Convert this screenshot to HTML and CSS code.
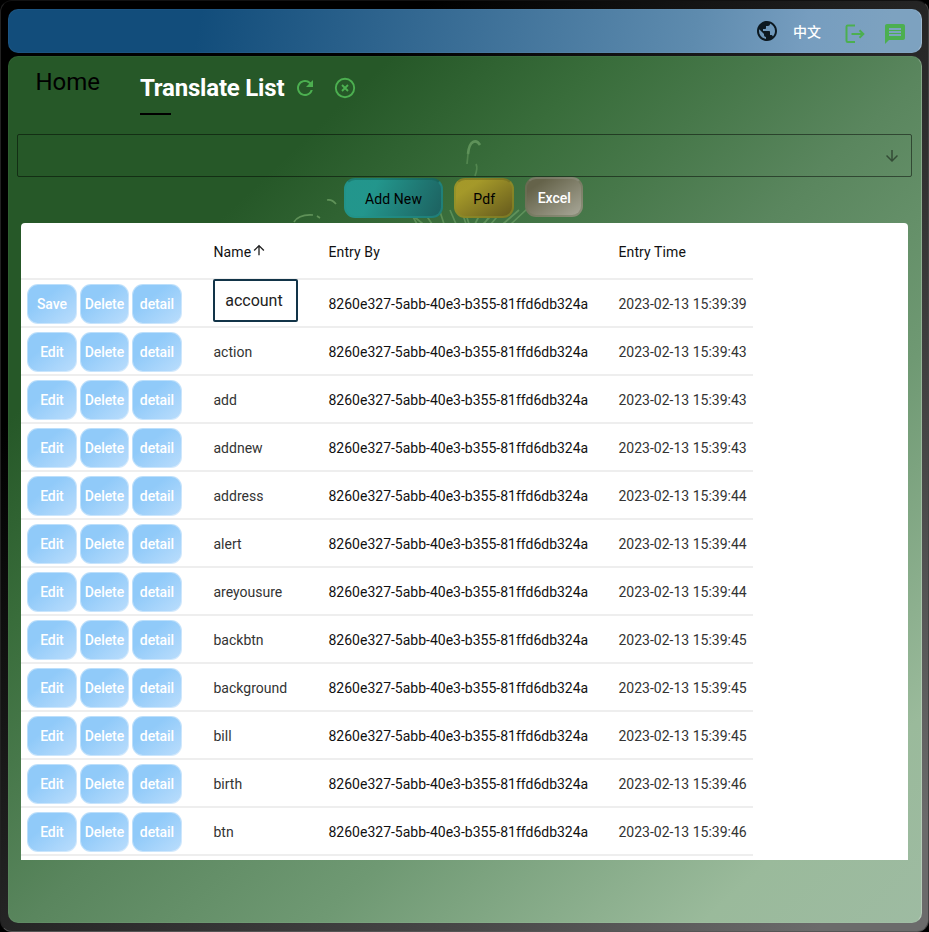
FILE: index.html
```
<!DOCTYPE html>
<html lang="en">
<head>
<meta charset="utf-8">
<title>Translate List</title>
<link rel="stylesheet" href="styles.css">
</head>
<body>
<div class="window">
  <header class="topbar">
    <svg class="globe" viewBox="0 0 24 24"><path d="M12 2C6.48 2 2 6.48 2 12s4.48 10 10 10 10-4.48 10-10S17.52 2 12 2zm-1 17.93c-3.95-.49-7-3.85-7-7.93 0-.62.08-1.21.21-1.79L9 15v1c0 1.1.9 2 2 2v1.93zm6.9-2.54c-.26-.81-1-1.39-1.9-1.39h-1v-3c0-.55-.45-1-1-1H8v-2h2c.55 0 1-.45 1-1V7h2c1.1 0 2-.9 2-2v-.41c2.93 1.19 5 4.06 5 7.41 0 2.08-.8 3.97-2.1 5.39z"/></svg>
    <span class="lang">中文</span>
    <svg class="logout" viewBox="0 0 20 20"><path d="M10 1.5H2.7Q1.5 1.5 1.5 2.7V16.8Q1.5 18 2.7 18H10M6.5 10H18M14.5 6.3L18.3 10L14.5 13.7"/></svg>
    <svg class="message" viewBox="0 0 24 24"><path d="M20 2H4c-1.1 0-1.99.9-1.99 2L2 22l4-4h14c1.1 0 2-.9 2-2V4c0-1.100-.9-2-2-2zm-2 12H6v-2h12v2zm0-3H6V9h12v2zm0-3H6V6h12v2z"/></svg>
  </header>
  <main class="panel">
    <svg class="firework" viewBox="0 0 340 100">
      <path d="M190 18Q191 8 195 6Q199 4 202 9" stroke-width="2.600" opacity=".9"/>
      <path d="M190 18L189 28M197 40Q200 32 198 28M194 43L191 50" opacity=".6"/>
      <path d="M16 86Q21 78 35 79M49 64Q54 63 58 68M39 80L42 82M80 68Q87 66 90 75M112 47L116 56"/>
      <path d="M129 70L139 88M142 70L154 88M157 60L166 88M172 74L178 88M181 67L188 88M205 72L197 88M221 66L206 88M228 70L213 88M241 74L225 88M249 73L233 88M187 75L191 88M214 79L205 88M133 78L145 88" opacity=".75"/>
      <path d="M129 51L131 55M153 57L155 62M204 48L207 44M215 60L218 56" opacity=".6"/>
    </svg>
    <nav class="tabs">
      <a class="home">Home</a>
      <div class="tab">
        <div class="tab-row">
          <span class="tab-title">Translate List</span>
          <svg class="refresh" viewBox="0 0 24 24"><path d="M17.65 6.35A7.958 7.958 0 0012 4c-4.42 0-7.990 3.580-7.990 8s3.570 8 7.990 8c3.730 0 6.840-2.550 7.730-6h-2.080A5.990 5.990 0 0112 18c-3.310 0-6-2.690-6-6s2.690-6 6-6c1.660 0 3.140.690 4.220 1.780L13 11h7V4z"/></svg>
          <svg class="close" viewBox="0 0 24 24"><circle cx="12" cy="12" r="9.200"/><path d="M9 9L15 15M15 9L9 15"/></svg>
        </div>
        <div class="indicator"></div>
      </div>
    </nav>
    <div class="select">
      <svg class="down" viewBox="0 0 24 24"><path d="M20 12l-1.410-1.410L13 16.170V4h-2v12.170l-5.580-5.590L4 12l8 8 8-8z"/></svg>
    </div>
    <div class="actions">
      <button class="action add">Add New</button>
      <button class="action pdf">Pdf</button>
      <button class="action excel">Excel</button>
    </div>
    <section class="card">
      <div class="table" id="table">
        <div class="row head">
          <span></span>
          <span class="name">Name<svg class="up" viewBox="0 0 24 24"><path d="M4 12l1.410 1.410L11 7.830V20h2V7.830l5.580 5.590L20 12l-8-8-8 8z"/></svg></span>
          <span>Entry By</span>
          <span>Entry Time</span>
        </div>
      </div>
    </section>
  </main>
</div>
<script src="rows.js"></script>
</body>
</html>
```
FILE: styles.css
```
* { box-sizing: border-box; }
body {
  margin: 0;
  width: 929px;
  height: 932px;
  overflow: hidden;
  background: #000;
  font-family: Roboto, "Noto Sans CJK SC", sans-serif;
  font-size: 14px;
}
.window {
  height: 932px;
  padding: 7.500px 6px 8px 7px;
  border: 1px solid;
  border-color: #111 #444 #555 #222;
  border-radius: 12px;
  background: linear-gradient(to bottom right, #000 23%, #222 48%, #303030 58%, #484848 75%, #6b6b6b 94%);
  display: flex;
  flex-direction: column;
  gap: 3px;
}
.topbar {
  flex: none;
  height: 44.500px;
  border-radius: 10px;
  border: 1px solid rgba(255, 255, 255, .04);
  border-right-color: rgba(255, 255, 255, .25);
  background: linear-gradient(100deg, #124d7b 21%, #5e8bae 75%, #769dbf 87%, #7da2c0 96%);
  background-origin: border-box;
  display: flex;
  align-items: center;
  padding: 0 16px 0 0;
  justify-content: flex-end;
}
.globe { width: 24px; height: 24px; fill: #0c1820; margin: 0 14px 0 0; }
.lang { color: #fff; font-weight: 500; line-height: 20px; margin: 2px 24px 0 0; }
.logout { width: 20px; height: 20px; fill: none; stroke: #4caf50; stroke-width: 2; margin: 6px 18px 0 0; }
.message { width: 24px; height: 24px; fill: #4caf50; margin: 6px -2px 0 0; }
.panel {
  position: relative;
  flex: 1;
  min-height: 0;
  border-radius: 10px;
  border: 1px solid rgba(255, 255, 255, .04);
  border-right-color: rgba(255, 255, 255, .25);
  background: linear-gradient(to bottom right, #265828 21%, #396d3b 33%, #47784a 41%, #5a865e 51%, #6f9973 67%, #9aba9b 88%, #9ebba2 100%);
  background-origin: border-box;
  padding: 0 8px;
  display: flex;
  flex-direction: column;
}
.firework {
  position: absolute;
  left: 269px;
  top: 79px;
  width: 340px;
  height: 100px;
  fill: none;
  stroke: rgba(170, 220, 150, .4);
  stroke-width: 1.700;
  filter: blur(.7px);
}
.tabs { height: 77px; display: flex; padding: 10px 0 0 18px; position: relative; }
.home { width: 105px; padding-left: .5px; font-size: 24px; line-height: 30px; color: #000; }
.tab-row { display: flex; align-items: center; height: 41px; }
.tab-title { width: 153px; font-size: 24px; font-weight: 700; color: #fff; letter-spacing: -.2px; white-space: nowrap; }
.refresh { width: 24px; height: 24px; fill: #4caf50; margin-right: 16px; }
.close { width: 24px; height: 24px; fill: none; stroke: #4caf50; stroke-width: 1.900; }
.indicator { width: 31px; height: 2px; background: #000; margin-top: 5px; }
.select {
  height: 43px;
  flex: none;
  margin-right: 1px;
  border: 1px solid rgba(0, 0, 0, .48);
  border-radius: 2px;
  display: flex;
  align-items: center;
  justify-content: flex-end;
  padding-right: 10px;
}
.down { width: 18px; height: 18px; fill: rgba(0, 0, 0, .45); }
.actions { height: 46px; display: flex; justify-content: center; gap: 11px; position: relative; padding-right: 3px; }
.action {
  height: 40px;
  margin: 1px 0 0;
  padding: 1px 0 0;
  border: 2px solid transparent;
  border-radius: 11px;
  background-origin: border-box;
  font: 400 14px/20px Roboto, sans-serif;
  letter-spacing: .1px;
  color: #000;
}
.add { width: 99.500px; border-color: rgba(34, 145, 136, .6); background-image: linear-gradient(115deg, rgba(28, 147, 137, .97) 30%, rgba(18, 94, 92, .95) 92%); border-top-color: rgba(20, 90, 74, .4); }
.pdf { width: 60px; border-color: rgba(140, 144, 43, .6); background-image: linear-gradient(to bottom right, rgba(162, 150, 35, .97) 25%, rgba(98, 86, 18, .95) 92%); border-top-color: rgba(91, 94, 30, .4); }
.excel { width: 58px; margin-top: 0; padding-top: 2px; border-color: rgba(110, 119, 91, .5); border-top-color: rgba(150, 156, 141, .4); background-image: linear-gradient(to bottom right, #65634a 20%, #a3a292 90%); color: #fff; font-weight: 500; letter-spacing: 0; }
.card {
  position: relative;
  height: 637px;
  margin: 0 5px 0 4px;
  background: #fff;
  border-radius: 4px 4px 0 0;
  overflow: hidden;
}
.table { width: 732px; }
.row {
  display: grid;
  grid-template-columns: 192.500px 115px 290px 1fr;
  align-items: center;
  height: 48px;
  border-bottom: 2px solid #eee;
  color: #333;
  white-space: nowrap;
}
.row > span { padding-top: 2px; }
.row.head { height: 57px; color: #111; letter-spacing: .1px; }
.name { display: flex; align-items: center; }
.up { width: 16px; height: 16px; margin-bottom: 4px; fill: #222; }
.buttons { display: flex; gap: 3px; padding: 1px 0 0 6.200px; }
.mini {
  width: 49.500px;
  height: 40px;
  padding: 0;
  border: 1px solid rgba(255, 255, 255, .4);
  border-radius: 11px;
  background: linear-gradient(to bottom right, #90caf9 35%, #b8dcfc 95%) border-box;
  color: #fff;
  font: 500 14px/20px Roboto, sans-serif;
  letter-spacing: -.1px;
}
.row .by { color: #111; }
.field {
  width: 85px;
  height: 43px;
  margin: -5px 0 0 -.300px;
  border: 2px solid #123448;
  border-radius: 2px;
  padding: 0 10px 1px;
  font: 400 16px/20px Roboto, sans-serif;
  color: #222;
}
```
FILE: rows.js
```
const rows = [
  ["account", 39], ["action", 43], ["add", 43], ["addnew", 43],
  ["address", 44], ["alert", 44], ["areyousure", 44], ["backbtn", 45],
  ["background", 45], ["bill", 45], ["birth", 46], ["btn", 46]
];
const table = document.getElementById("table");
rows.forEach(([name, seconds], i) => {
  const first = i === 0;
  const row = document.createElement("div");
  row.className = "row";
  row.innerHTML = `
    <div class="buttons">
      <button class="mini">${first ? "Save" : "Edit"}</button>
      <button class="mini">Delete</button>
      <button class="mini">detail</button>
    </div>
    ${first ? `<input class="field" value="${name}">` : `<span>${name}</span>`}
    <span class="by">8260e327-5abb-40e3-b355-81ffd6db324a</span>
    <span>2023-02-13 15:39:${seconds}</span>`;
  table.append(row);
});
```
